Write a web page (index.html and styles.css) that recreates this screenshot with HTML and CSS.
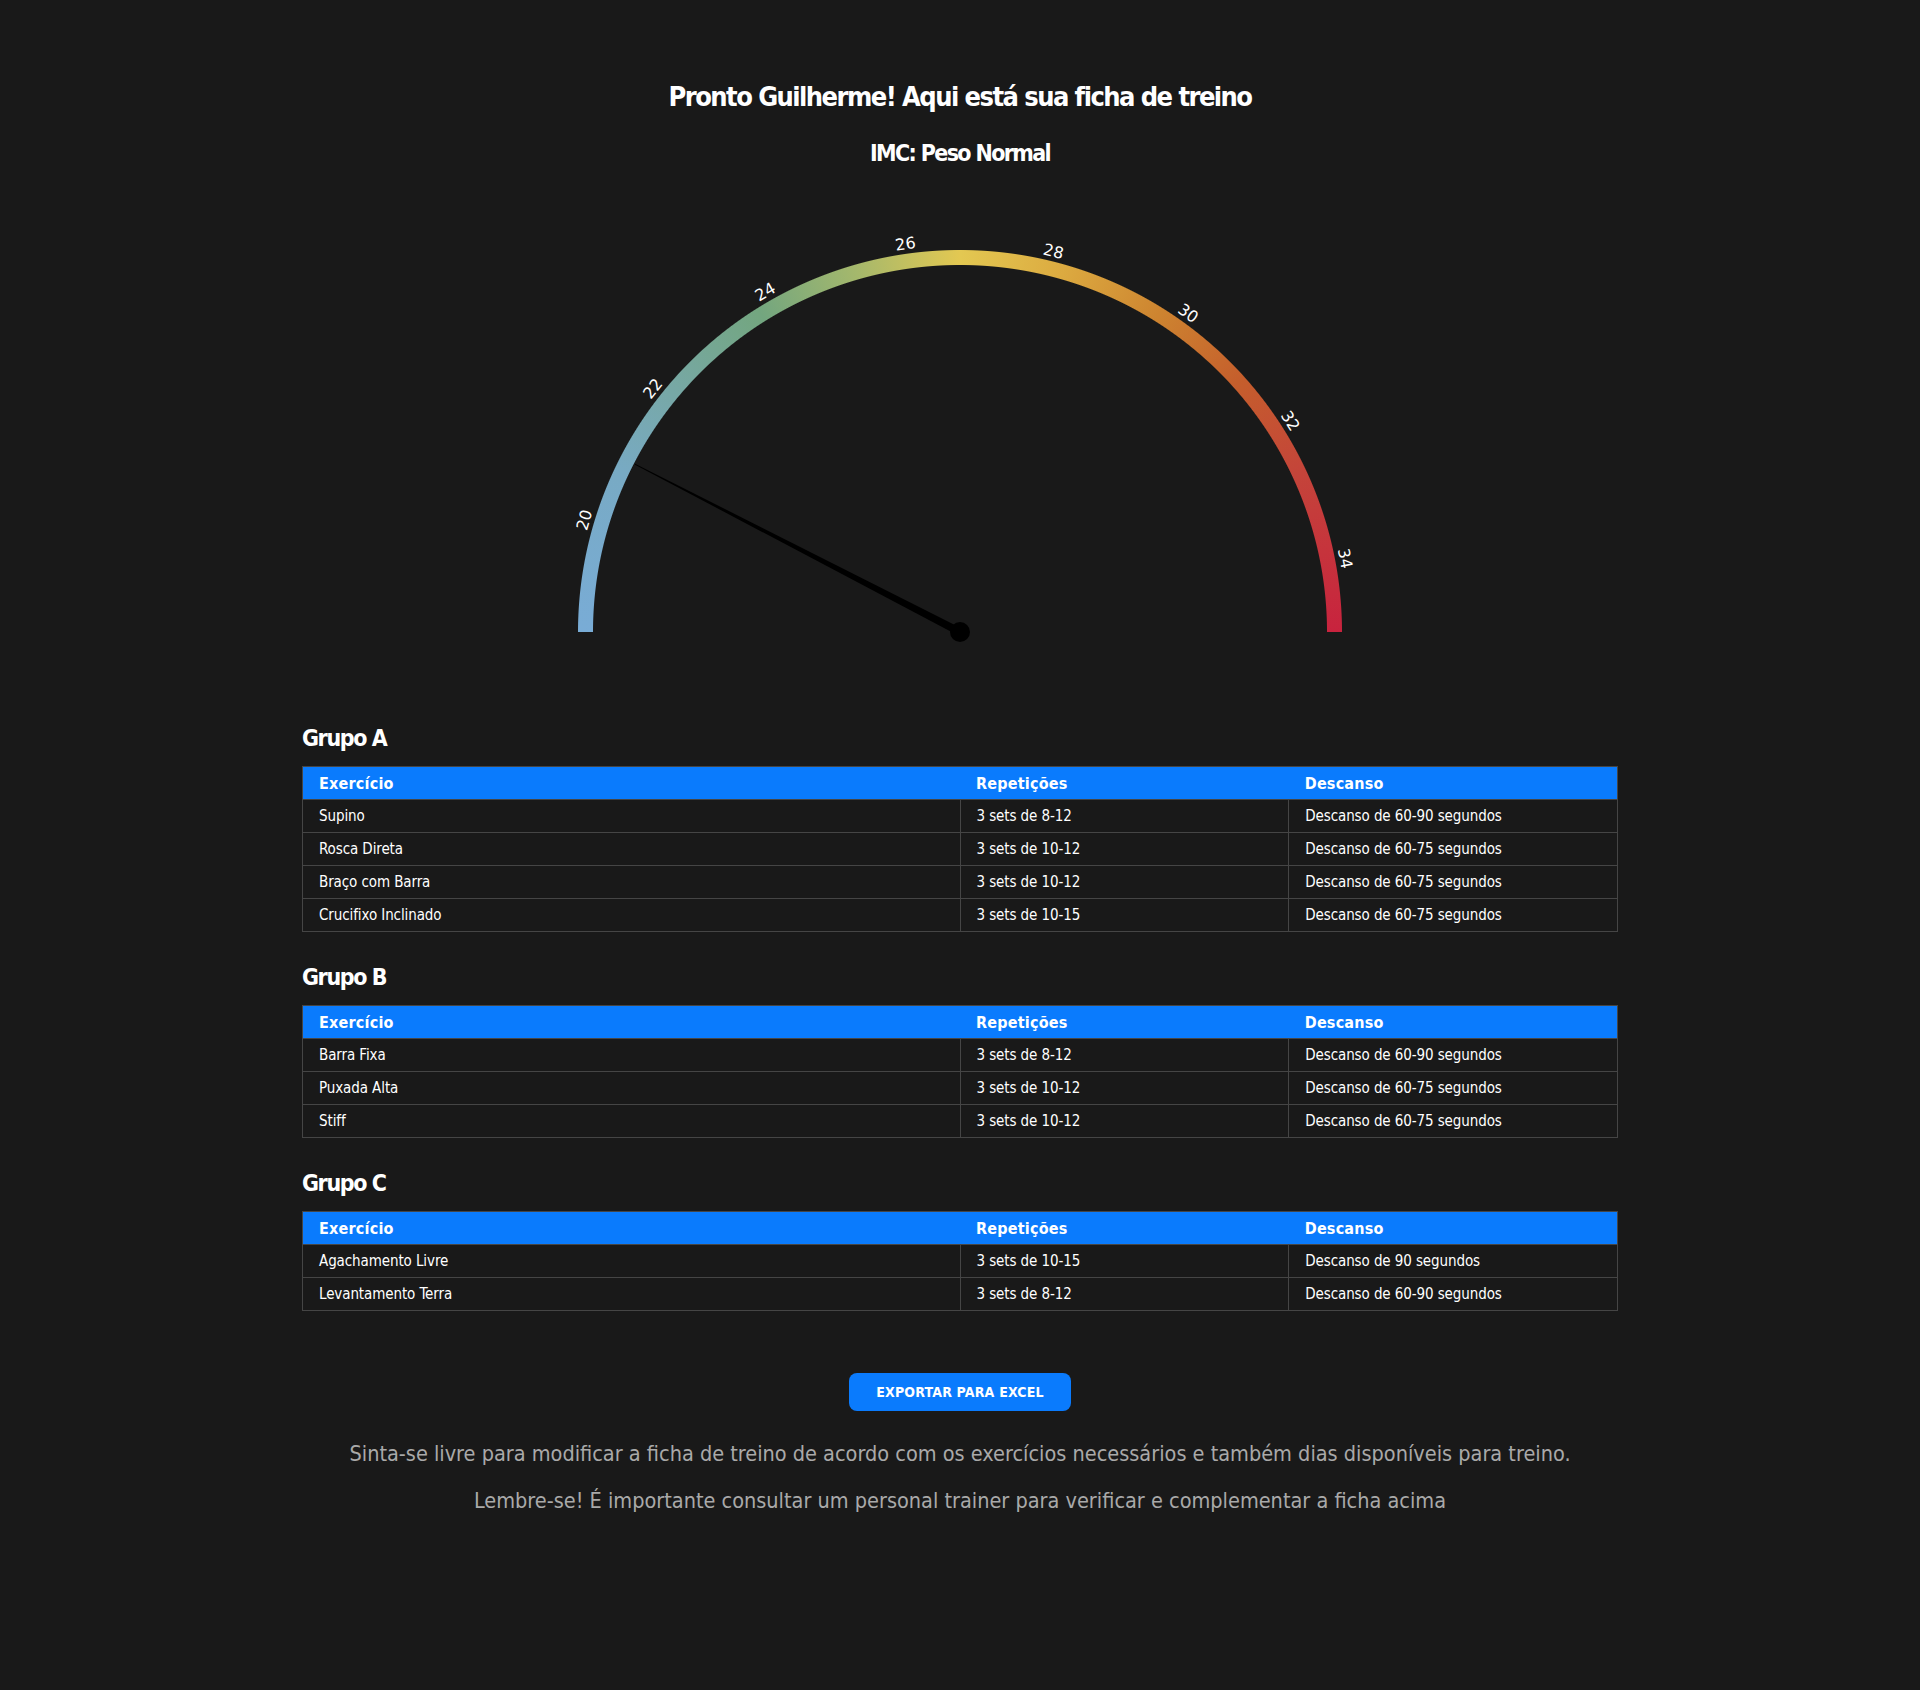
FILE: index.html
```html
<!DOCTYPE html>
<html lang="pt-BR">
<head>
<meta charset="utf-8">
<title>Ficha de treino</title>
<link rel="stylesheet" href="styles.css">
</head>
<body>
<main class="page">
  <h1 class="title">Pronto Guilherme! Aqui está sua ficha de treino</h1>
  <h2 class="subtitle">IMC: Peso Normal</h2>

  <div class="gauge">
    <div class="gauge-arc"></div>
    <svg class="gauge-svg" width="800" height="432" viewBox="0 0 800 432">
      <g class="tick-labels">
        <text transform="translate(24.3 310) rotate(-73.4)">20</text>
        <text transform="translate(92.8 178.5) rotate(-51.6)">22</text>
        <text transform="translate(205.2 81.8) rotate(-29.8)">24</text>
        <text transform="translate(345.4 33.8) rotate(-8)">26</text>
        <text transform="translate(493.5 41.3) rotate(13.8)">28</text>
        <text transform="translate(628.2 103.3) rotate(35.6)">30</text>
        <text transform="translate(730.3 210.8) rotate(57.4)">32</text>
        <text transform="translate(785.1 348.5) rotate(79.2)">34</text>
      </g>
      <polygon class="needle" points="401.8,418.4 75.0,253.7 74.6,254.5 398.2,425.6"/>
      <circle class="needle" cx="400" cy="422" r="10"/>
    </svg>
  </div>

  <section class="group">
    <h3 class="group-title">Grupo A</h3>
    <table class="sheet">
      <thead><tr><th>Exercício</th><th>Repetições</th><th>Descanso</th></tr></thead>
      <tbody>
        <tr><td>Supino</td><td>3 sets de 8-12</td><td>Descanso de 60-90 segundos</td></tr>
        <tr><td>Rosca Direta</td><td>3 sets de 10-12</td><td>Descanso de 60-75 segundos</td></tr>
        <tr><td>Braço com Barra</td><td>3 sets de 10-12</td><td>Descanso de 60-75 segundos</td></tr>
        <tr><td>Crucifixo Inclinado</td><td>3 sets de 10-15</td><td>Descanso de 60-75 segundos</td></tr>
      </tbody>
    </table>
  </section>

  <section class="group">
    <h3 class="group-title">Grupo B</h3>
    <table class="sheet">
      <thead><tr><th>Exercício</th><th>Repetições</th><th>Descanso</th></tr></thead>
      <tbody>
        <tr><td>Barra Fixa</td><td>3 sets de 8-12</td><td>Descanso de 60-90 segundos</td></tr>
        <tr><td>Puxada Alta</td><td>3 sets de 10-12</td><td>Descanso de 60-75 segundos</td></tr>
        <tr><td>Stiff</td><td>3 sets de 10-12</td><td>Descanso de 60-75 segundos</td></tr>
      </tbody>
    </table>
  </section>

  <section class="group">
    <h3 class="group-title">Grupo C</h3>
    <table class="sheet">
      <thead><tr><th>Exercício</th><th>Repetições</th><th>Descanso</th></tr></thead>
      <tbody>
        <tr><td>Agachamento Livre</td><td>3 sets de 10-15</td><td>Descanso de 90 segundos</td></tr>
        <tr><td>Levantamento Terra</td><td>3 sets de 8-12</td><td>Descanso de 60-90 segundos</td></tr>
      </tbody>
    </table>
  </section>

  <div class="actions">
    <button class="export-btn" type="button">Exportar para Excel</button>
  </div>

  <p class="note">Sinta-se livre para modificar a ficha de treino de acordo com os exercícios necessários e também dias disponíveis para treino.</p>
  <p class="note note-second">Lembre-se! É importante consultar um personal trainer para verificar e complementar a ficha acima</p>
</main>
</body>
</html>
```

FILE: styles.css
```css
* { box-sizing: border-box; }

html, body {
  margin: 0;
  padding: 0;
  background: #191919;
}

body {
  color: #ffffff;
  font-family: "DejaVu Sans Condensed", "Liberation Sans", sans-serif;
  min-height: 1690px;
}

.page {
  width: 1316px;
  margin: 0 auto;
  padding-top: 80px;
}

.title {
  margin: 0;
  font-size: 27px;
  line-height: 34px;
  font-weight: 700;
  text-align: center;
  letter-spacing: -1.55px;
}

.subtitle {
  margin: 24px 0 0;
  font-size: 23px;
  line-height: 30px;
  font-weight: 700;
  text-align: center;
  letter-spacing: -1.65px;
}

.gauge {
  position: relative;
  width: 800px;
  height: 432px;
  margin: 42px auto 0;
}

.gauge-arc {
  position: absolute;
  left: 18px;
  top: 40px;
  width: 764px;
  height: 382px;
  background: conic-gradient(from 270deg at 50% 100%,
    #79acd6 0deg,
    #78aac4 25deg,
    #77a8a6 40deg,
    #73a67f 58deg,
    #a5b86c 74deg,
    #e3c852 90deg,
    #dcaa40 106deg,
    #cd8430 122deg,
    #c55e2c 138deg,
    #c4443a 155deg,
    #c8233e 180deg,
    #c8233e 360deg);
  -webkit-mask: radial-gradient(circle at 50% 100%, transparent 366.5px, #000 367.5px, #000 381.5px, transparent 382.5px);
  mask: radial-gradient(circle at 50% 100%, transparent 366.5px, #000 367.5px, #000 381.5px, transparent 382.5px);
}

.gauge-svg {
  position: absolute;
  left: 0;
  top: 0;
  overflow: visible;
}

.tick-labels text {
  fill: #ffffff;
  font-family: "DejaVu Sans", sans-serif;
  font-size: 16px;
  text-anchor: middle;
  dominant-baseline: central;
}

.needle { fill: #000000; }

.group { margin-top: 81px; }
.group + .group { margin-top: 30px; }

.group-title {
  margin: 0 0 13px;
  font-size: 23px;
  line-height: 30px;
  font-weight: 700;
  letter-spacing: -1.4px;
}

.sheet {
  width: 100%;
  border-collapse: collapse;
  table-layout: fixed;
  border: 1px solid #454545;
  font-size: 16px;
}

.sheet th:nth-child(1), .sheet td:nth-child(1) { width: 50%; }
.sheet th:nth-child(2), .sheet td:nth-child(2) { width: 25%; }
.sheet th:nth-child(3), .sheet td:nth-child(3) { width: 25%; }

.sheet th {
  background: #0a7bfd;
  color: #ffffff;
  font-weight: 700;
  text-align: left;
  height: 33px;
  padding: 0 16px;
  border-top: 1px solid #454545;
  letter-spacing: 0.2px;
}

.sheet td {
  height: 33px;
  padding: 0 16px;
  border: 1px solid #454545;
  color: #ffffff;
  font-size: 15px;
  letter-spacing: -0.1px;
}

.actions {
  display: flex;
  justify-content: center;
  margin-top: 62px;
}

.export-btn {
  width: 222px;
  height: 38px;
  border: 0;
  border-radius: 8px;
  background: #0a7bfd;
  color: #ffffff;
  font-family: inherit;
  font-size: 14px;
  font-weight: 700;
  text-transform: uppercase;
  letter-spacing: 0.2px;
}

.note {
  margin: 27px 0 0;
  color: #a9a9a9;
  font-size: 21.5px;
  line-height: 32px;
  text-align: center;
}

.note-second { margin-top: 15px; }
```
